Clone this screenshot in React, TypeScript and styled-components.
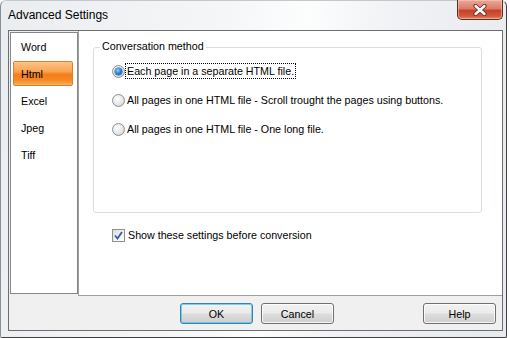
import React from "react";
import styled, { createGlobalStyle } from "styled-components";

const GlobalStyle = createGlobalStyle`
  html, body {
    margin: 0;
    padding: 0;
    background: #ffffff;
  }
  body {
    font-family: "Liberation Sans", Arial, sans-serif;
    font-size: 10.7px;
    color: #000;
  }
`;

const Frame = styled.div`
  box-sizing: border-box;
  width: 507px;
  height: 338px;
  display: flex;
  flex-direction: column;
  padding: 0 3px 6px 7px;
  border: 1px solid #3f3f3f;
  border-top-color: #c4c8cd;
  border-left-color: #8a8f95;
  border-radius: 6px 6px 2px 2px;
  background: linear-gradient(
    100deg,
    #eaedf0 0%,
    #f5f6f8 40%,
    #fcfdfd 55%,
    #f0f2f5 70%,
    #e6e9ed 100%
  );
`;

const TitleBar = styled.div`
  height: 29px;
  display: flex;
  align-items: flex-start;
`;

const Title = styled.div`
  font-size: 12px;
  line-height: 14px;
  padding-top: 7px;
  color: #000;
`;

const CloseButton = styled.div`
  box-sizing: border-box;
  margin: -1px 0 0 auto;
  width: 46px;
  height: 20px;
  display: flex;
  align-items: center;
  justify-content: center;
  border: 1px solid #5e2a22;
  border-top: none;
  border-radius: 0 0 5px 5px;
  background: linear-gradient(
    to bottom,
    #e9a899 0%,
    #db7c68 45%,
    #c54227 55%,
    #cf5a3c 85%,
    #e08c6d 100%
  );
  box-shadow: inset 0 0 0 1px rgba(255, 220, 210, 0.45);
`;

const Client = styled.div`
  flex: 1;
  display: flex;
  flex-direction: column;
  border: 1px solid #6e6e6e;
  background: #f0f0f0;
`;

const Main = styled.div`
  height: 265px;
  display: flex;
`;

const SideColumn = styled.div`
  width: 69px;
`;

const List = styled.div`
  box-sizing: border-box;
  width: 68px;
  height: 262px;
  margin: 1px 0 0 1px;
  border: 1px solid #828790;
  background: #fff;
  display: flex;
  flex-direction: column;
`;

const ListItem = styled.div`
  height: 27px;
  padding: 1px 4px 1px 2px;
  box-sizing: border-box;
`;

const ItemBox = styled.div<{ $active?: boolean }>`
  box-sizing: border-box;
  height: 25px;
  display: flex;
  align-items: center;
  padding-left: 7px;
  border: 1px solid ${(p) => (p.$active ? "#d8822e" : "transparent")};
  border-radius: 2px;
  background: ${(p) =>
    p.$active
      ? "linear-gradient(to bottom, #fdc487 0%, #fba553 40%, #f47e17 55%, #f68a26 80%, #fbb05c 100%)"
      : "transparent"};
`;

const Panel = styled.div`
  flex: 1;
  border-left: 1px solid #a0a0a0;
  border-bottom: 1px solid #a0a0a0;
  background: #fff;
  display: flex;
  flex-direction: column;
  align-items: flex-start;
`;

const GroupBox = styled.div`
  box-sizing: border-box;
  width: 389px;
  height: 166px;
  margin: 16px 0 0 14px;
  padding-left: 18px;
  border: 1px solid #d5dfe5;
  border-radius: 3px;
  display: flex;
  flex-direction: column;
  align-items: flex-start;
`;

const Legend = styled.div`
  margin: -8px 0 0 -12px;
  padding: 0 2px;
  line-height: 13px;
  background: #fff;
`;

const Options = styled.div`
  margin-top: 10px;
  display: flex;
  flex-direction: column;
  gap: 13px;
`;

const OptionRow = styled.div`
  height: 16px;
  display: flex;
  align-items: center;
  gap: 1px;
`;

const Radio = styled.span<{ $checked?: boolean }>`
  box-sizing: border-box;
  width: 13px;
  height: 13px;
  border-radius: 50%;
  border: 1px solid #8c8f92;
  background: radial-gradient(circle at 40% 35%, #ffffff 0%, #e6e6e6 55%, #c9cacb 100%);
  display: flex;
  align-items: center;
  justify-content: center;
  &::after {
    content: "";
    display: ${(p) => (p.$checked ? "block" : "none")};
    width: 7px;
    height: 7px;
    border-radius: 50%;
    background: radial-gradient(circle at 40% 35%, #9ad2fb 0%, #2a86d4 45%, #0d4f97 100%);
    box-shadow: 0 0 0 0.5px #26507a;
  }
`;

const OptionLabel = styled.span<{ $focused?: boolean }>`
  line-height: 14px;
  padding: 0 1px;
  outline: ${(p) => (p.$focused ? "1px dotted #000" : "none")};
  outline-offset: 0;
`;

const CheckRow = styled.div`
  margin: 15px 0 0 33px;
  display: flex;
  align-items: center;
  gap: 3px;
  line-height: 14px;
`;

const CheckBox = styled.span`
  box-sizing: border-box;
  width: 13px;
  height: 13px;
  border: 1px solid #8e8f8f;
  background: linear-gradient(135deg, #dcdcdc 0%, #f4f4f4 60%, #ffffff 100%);
  display: flex;
  align-items: center;
  justify-content: center;
`;

const ButtonBar = styled.div`
  flex: 1;
  display: flex;
  align-items: flex-start;
  padding: 7px 6px 0 171px;
  gap: 8px;
`;

const Button = styled.div<{ $default?: boolean; $push?: boolean }>`
  box-sizing: border-box;
  width: 73px;
  height: 21px;
  display: flex;
  align-items: center;
  justify-content: center;
  margin-left: ${(p) => (p.$push ? "auto" : "0")};
  border: 1px solid ${(p) => (p.$default ? "#3c7fb1" : "#707070")};
  border-radius: 3px;
  background: linear-gradient(
    to bottom,
    #f2f2f2 0%,
    #ebebeb 48%,
    #dddddd 52%,
    #cfcfcf 100%
  );
  box-shadow: inset 0 0 0 1px
    ${(p) => (p.$default ? "rgba(72, 200, 240, 0.75)" : "rgba(255, 255, 255, 0.8)")};
`;

const items = ["Word", "Html", "Excel", "Jpeg", "Tiff"];

const options = [
  "Each page in a separate HTML file.",
  "All pages in one HTML file - Scroll trought the pages using buttons.",
  "All pages in one HTML file - One long file.",
];

export default function App() {
  return (
    <>
      <GlobalStyle />
      <Frame>
        <TitleBar>
          <Title>Advanced Settings</Title>
          <CloseButton>
            <svg width="16" height="12" viewBox="0 0 16 12">
              <path
                d="M3.5 2 L12.5 10 M12.5 2 L3.5 10"
                fill="none"
                stroke="#6b2a20"
                strokeWidth="4.2"
                strokeLinecap="round"
              />
              <path
                d="M3.5 2 L12.5 10 M12.5 2 L3.5 10"
                fill="none"
                stroke="#ffffff"
                strokeWidth="2.4"
                strokeLinecap="round"
              />
            </svg>
          </CloseButton>
        </TitleBar>
        <Client>
          <Main>
            <SideColumn>
              <List>
                {items.map((it) => (
                  <ListItem key={it}>
                    <ItemBox $active={it === "Html"}>{it}</ItemBox>
                  </ListItem>
                ))}
              </List>
            </SideColumn>
            <Panel>
              <GroupBox>
                <Legend>Conversation method</Legend>
                <Options>
                  {options.map((o, i) => (
                    <OptionRow key={o}>
                      <Radio $checked={i === 0} />
                      <OptionLabel $focused={i === 0}>{o}</OptionLabel>
                    </OptionRow>
                  ))}
                </Options>
              </GroupBox>
              <CheckRow>
                <CheckBox>
                  <svg width="9" height="9" viewBox="0 0 9 9">
                    <path
                      d="M1 4.5 L3.5 7.5 L8 1"
                      fill="none"
                      stroke="#3b5aa8"
                      strokeWidth="1.8"
                    />
                  </svg>
                </CheckBox>
                <span>Show these settings before conversion</span>
              </CheckRow>
            </Panel>
          </Main>
          <ButtonBar>
            <Button $default>OK</Button>
            <Button>Cancel</Button>
            <Button $push>Help</Button>
          </ButtonBar>
        </Client>
      </Frame>
    </>
  );
}
